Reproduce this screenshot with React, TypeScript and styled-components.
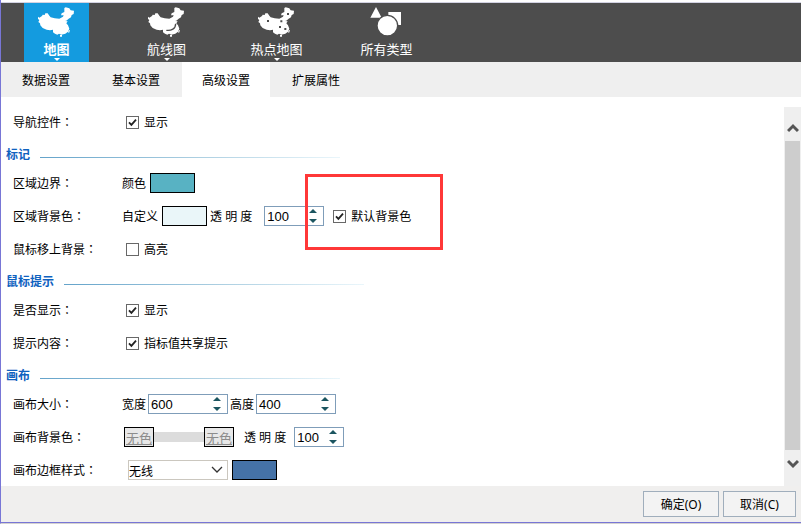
import React, { ReactNode, useState } from "react";
import styled, { createGlobalStyle } from "styled-components";

const GlobalStyle = createGlobalStyle`
  *, *::before, *::after { box-sizing: border-box; }
  body { margin: 0; background: #fff; }
  body, button, input, select { font-family: "Noto Sans", "Noto Sans CJK SC", sans-serif; font-size: 12px; color: #000; }
`;

const Dialog = styled.main`
  display: flex;
  flex-direction: column;
  height: 100vh;
  border-left: 1px solid #7876d6;
  border-bottom: 1px solid #d4d2d0;
`;
const TopEdge = styled.div`
  flex: none;
  height: 3px;
  border-bottom: 1px solid #d2d2e2;
`;
const Toolbar = styled.nav`
  flex: none;
  display: flex;
  gap: 45px;
  height: 59px;
  padding-left: 23px;
  background: #4d4d4d;
`;
const ChartTypeButton = styled.button<{ $active?: boolean }>`
  display: flex;
  flex-direction: column;
  align-items: center;
  width: 65px;
  padding: 3px 0 0;
  border: 0;
  background: ${(p) => (p.$active ? "#149bdf" : "transparent")};
  color: #fff;
  font-size: 13px;
  font-weight: ${(p) => (p.$active ? 700 : 400)};
  line-height: 18px;
  white-space: nowrap;
  svg { display: block; flex: none; }
`;
const DownMark = styled.span`
  border: 3px solid transparent;
  border-top-color: #fff;
  border-bottom: 0;
`;
const TabBar = styled.div`
  flex: none;
  display: flex;
  gap: 2px;
  height: 35px;
  padding-left: 1px;
  background: #efefef;
`;
const Tab = styled.button<{ $active?: boolean }>`
  width: 88px;
  padding: 0 0 0 20px;
  border: 0;
  text-align: left;
  background: ${(p) => (p.$active ? "#fff" : "transparent")};
`;
const Body = styled.div`
  flex: 1;
  min-height: 0;
  display: flex;
`;
const Form = styled.form`
  flex: 1;
  min-width: 0;
  overflow: hidden;
  padding-top: 9px;
`;
const Row = styled.div`
  display: flex;
  align-items: center;
  height: 33px;
  padding: 0 0 1px 12px;
`;
const RowLabel = styled.span`
  flex: none;
  width: 108px;
`;
const Colon = styled.span`
  font-family: "Noto Sans CJK TC", sans-serif;
`;
const Controls = styled.div`
  display: flex;
  align-items: center;
  white-space: nowrap;
`;
const Section = styled.h2`
  display: flex;
  align-items: center;
  gap: 10px;
  height: 28px;
  margin: 0;
  padding: 2px 0 0 5px;
  color: #0f62bf;
  font-size: 12px;
  font-weight: 700;
  &::after {
    content: "";
    width: 300px;
    height: 1px;
    margin-top: 7px;
    background: linear-gradient(90deg, #64a3ca, #a9cde0 50%, #eaf6fb);
  }
`;
const CheckLabel = styled.label<{ $afterField?: boolean }>`
  display: flex;
  align-items: center;
  gap: 5px;
  margin-left: ${(p) => (p.$afterField ? 9 : 5)}px;
`;
const CheckInput = styled.input`
  appearance: none;
  flex: none;
  width: 13px;
  height: 13px;
  margin: 0;
  border: 1px solid #686868;
  background: #fff;
  &:checked {
    background: #fff url("data:image/svg+xml,%3Csvg xmlns='http://www.w3.org/2000/svg' viewBox='0 0 11 11'%3E%3Cpath d='M2 5.3 4.4 7.8 9 2.6' fill='none' stroke='%23222' stroke-width='1.8'/%3E%3C/svg%3E") center / 11px 11px no-repeat;
  }
`;
const FieldLabel = styled.label<{ $gap?: number; $lead?: number }>`
  display: flex;
  align-items: center;
  gap: ${(p) => p.$gap ?? 2}px;
  margin-left: ${(p) => p.$lead ?? 1}px;
`;
const Indented = styled.div<{ $by: number }>`
  display: flex;
  align-items: center;
  margin-left: ${(p) => p.$by}px;
`;
const Swatch = styled.button<{ $color: string }>`
  width: 45px;
  height: 20px;
  padding: 0;
  border: 1px solid #000;
  background: ${(p) => p.$color};
`;
const SpinBox = styled.span<{ $width: number }>`
  display: flex;
  align-items: center;
  width: ${(p) => p.$width}px;
  height: 20px;
  padding-right: 6px;
  border: 1px solid #7f9db9;
  background: #fff;
`;
const SpinInput = styled.input`
  flex: 1;
  min-width: 0;
  height: 18px;
  padding: 0 0 0 2px;
  border: 0;
  outline: 0;
  background: transparent;
  font-family: "Liberation Sans", sans-serif;
  font-size: 13px;
`;
const SpinButtons = styled.span`
  display: flex;
  flex-direction: column;
  gap: 2px;
`;
const SpinButton = styled.button`
  display: block;
  width: 8px;
  height: 8px;
  padding: 0;
  border: 0;
  background: transparent;
  svg { display: block; }
`;
const NoColor = styled.button`
  width: 30px;
  height: 20px;
  padding: 3px 0 0;
  border: 1px solid #000;
  background: #e8e8e8;
  color: #8c8c8c;
  font-size: 13px;
  line-height: 15px;
  text-decoration: underline;
  white-space: nowrap;
`;
const GradientTrack = styled.span`
  width: 50px;
  height: 10px;
  background: #dcdcdc;
`;
const SelectWrap = styled.span`
  display: grid;
  align-items: center;
  width: 100px;
  height: 20px;
  margin-right: 4px;
  > * { grid-area: 1 / 1; }
  svg { justify-self: end; margin-right: 5px; pointer-events: none; }
`;
const LineSelect = styled.select`
  appearance: none;
  width: 100%;
  height: 20px;
  padding: 2px 0 0;
  border: 1px solid #cbc7bf;
  border-radius: 0;
  background: #fff;
`;
const ScrollBar = styled.div`
  flex: none;
  display: flex;
  flex-direction: column;
  width: 17px;
  margin-top: 10px;
  padding: 0 1px;
  background: #efefef;
`;
const ScrollButton = styled.button`
  flex: none;
  display: flex;
  justify-content: center;
  height: 34px;
  padding: 15px 0 0;
  border: 0;
  background: transparent;
`;
const ScrollButtonDown = styled(ScrollButton)`
  height: 36px;
  padding-top: 9px;
`;
const Thumb = styled.div`
  flex: 1;
  background: #cdcdcd;
`;
const Footer = styled.footer`
  flex: none;
  display: flex;
  justify-content: flex-end;
  align-items: flex-start;
  gap: 4px;
  height: 37px;
  padding: 5px 5px 0;
  border-bottom: 1px solid #7876d6;
  background: #f0efee;
`;
const FooterButton = styled.button<{ $main?: boolean }>`
  width: ${(p) => (p.$main ? 76 : 73)}px;
  height: 26px;
  padding: 0 0 1px;
  border: 1px solid #a0aebc;
  background: #f3f3f3;
`;
const Highlight = styled.div`
  position: absolute;
  left: 305px;
  top: 174px;
  width: 138px;
  height: 76px;
  border: 3px solid #ff3838;
  pointer-events: none;
`;

const INK = "#4d4d4d";

const mainland =
  "M114 50 118 53 126 48 128 44 134 45 136 40 143 40 148 47 152 52 164 55 178 56 189 50 191 46 183 46 185 40 193 36 193 24 197 22 208 25 212 31 222 32 221 42 215 45 213 52 206 56 199 62 195 63 203 64 199 70 204 76 208 86 204 95 196 101 184 104 177 101 172 104 165 101 159 97 159 89 150 91 140 89 128 84 121 76 120 70 115 66 118 60 114 57Z";

function MapIcon({ kind }: { kind: "plain" | "route" | "heat" }) {
  return (
    <svg width="37" height="34" viewBox="114 18 111 102" aria-hidden="true">
      <path d={mainland} fill="#fff" />
      <path d="M180 105h6v5h-6zM204 96l4-6 2 1-3 8z" fill="#fff" />
      {kind === "route" && <path d="M169 91C184 93 197 86 197 71" fill="none" stroke={INK} strokeWidth="4" />}
      {kind === "heat" && (
        <path
          d="M141 60h6v6h-6zM201 39h6v6h-6zM181 61h6v6h-6zM177 78h6v6h-6zM193 84h6v6h-6z"
          fill={INK}
        />
      )}
    </svg>
  );
}

function ShapesIcon() {
  return (
    <svg width="37" height="34" viewBox="444 18 111 102" aria-hidden="true">
      <path d="M468 21 485 53H451ZM505 36H543V75H505Z" fill="#fff" />
      <circle cx="502" cy="77" r="31" fill="#fff" stroke={INK} strokeWidth="4" />
    </svg>
  );
}

function Check({ label, on, afterField }: { label: string; on?: boolean; afterField?: boolean }) {
  return (
    <CheckLabel $afterField={afterField}>
      <CheckInput type="checkbox" defaultChecked={on} />
      {label}
    </CheckLabel>
  );
}

type SpinnerProps = { label: string; initial: number; width: number; gap?: number; lead?: number };

function Spinner({ label, initial, width, gap, lead }: SpinnerProps) {
  const [value, setValue] = useState(String(initial));
  const step = (by: number) => setValue(String((Number(value) || 0) + by));
  return (
    <FieldLabel $gap={gap} $lead={lead}>
      {label}
      <SpinBox $width={width}>
        <SpinInput value={value} onChange={(e) => setValue(e.target.value)} />
        <SpinButtons>
          <SpinButton type="button" aria-label="+" onClick={() => step(1)}>
            <svg width="8" height="8"><path d="M4 2 8 6H0Z" fill="#1b5560" /></svg>
          </SpinButton>
          <SpinButton type="button" aria-label="-" onClick={() => step(-1)}>
            <svg width="8" height="8"><path d="M4 6 0 2H8Z" fill="#1b5560" /></svg>
          </SpinButton>
        </SpinButtons>
      </SpinBox>
    </FieldLabel>
  );
}

function FormRow({ label, children }: { label: string; children: ReactNode }) {
  return (
    <Row>
      <RowLabel>{label}<Colon>：</Colon></RowLabel>
      <Controls>{children}</Controls>
    </Row>
  );
}

export default function App() {
  return (
    <>
      <GlobalStyle />
      <Dialog>
        <TopEdge />
        <Toolbar>
          <ChartTypeButton $active><MapIcon kind="plain" />地图<DownMark /></ChartTypeButton>
          <ChartTypeButton><MapIcon kind="route" />航线图<DownMark /></ChartTypeButton>
          <ChartTypeButton><MapIcon kind="heat" />热点地图<DownMark /></ChartTypeButton>
          <ChartTypeButton><ShapesIcon />所有类型</ChartTypeButton>
        </Toolbar>
        <TabBar role="tablist">
          <Tab role="tab">数据设置</Tab>
          <Tab role="tab">基本设置</Tab>
          <Tab role="tab" $active aria-selected>高级设置</Tab>
          <Tab role="tab">扩展属性</Tab>
        </TabBar>
        <Body>
          <Form>
            <FormRow label="导航控件"><Check label="显示" on /></FormRow>
            <Section>标记</Section>
            <FormRow label="区域边界">
              <FieldLabel $gap={4}>颜色<Swatch type="button" $color="#58b2c3" /></FieldLabel>
            </FormRow>
            <FormRow label="区域背景色">
              <FieldLabel $gap={4}>自定义<Swatch type="button" $color="#eaf6f9" /></FieldLabel>
              <Spinner label="透 明 度" initial={100} width={60} gap={12} lead={3} />
              <Check label="默认背景色" on afterField />
            </FormRow>
            <FormRow label="鼠标移上背景"><Check label="高亮" /></FormRow>
            <Section>鼠标提示</Section>
            <FormRow label="是否显示"><Check label="显示" on /></FormRow>
            <FormRow label="提示内容"><Check label="指标值共享提示" on /></FormRow>
            <Section>画布</Section>
            <FormRow label="画布大小">
              <Spinner label="宽度" initial={600} width={80} />
              <Spinner label="高度" initial={400} width={80} lead={2} />
            </FormRow>
            <FormRow label="画布背景色">
              <Indented $by={3}>
                <NoColor type="button">无色</NoColor>
                <GradientTrack />
                <NoColor type="button">无色</NoColor>
              </Indented>
              <Spinner label="透 明 度" initial={100} width={50} gap={8} lead={10} />
            </FormRow>
            <FormRow label="画布边框样式">
              <Indented $by={7}>
                <SelectWrap>
                  <LineSelect aria-label="画布边框样式"><option>无线</option></LineSelect>
                  <svg width="12" height="8"><path d="M1 1 6 6 11 1" fill="none" stroke="#333" strokeWidth="1.300" /></svg>
                </SelectWrap>
                <Swatch type="button" $color="#4572a7" />
              </Indented>
            </FormRow>
          </Form>
          <ScrollBar>
            <ScrollButton type="button" aria-label="▲">
              <svg width="12" height="11"><path d="M1 9 6 4 11 9" fill="none" stroke="#555" strokeWidth="3" /></svg>
            </ScrollButton>
            <Thumb />
            <ScrollButtonDown type="button" aria-label="▼">
              <svg width="12" height="11"><path d="M1 2 6 7 11 2" fill="none" stroke="#555" strokeWidth="3" /></svg>
            </ScrollButtonDown>
          </ScrollBar>
        </Body>
        <Footer>
          <FooterButton type="button" $main>确定(O)</FooterButton>
          <FooterButton type="button">取消(C)</FooterButton>
        </Footer>
      </Dialog>
      <Highlight />
    </>
  );
}
